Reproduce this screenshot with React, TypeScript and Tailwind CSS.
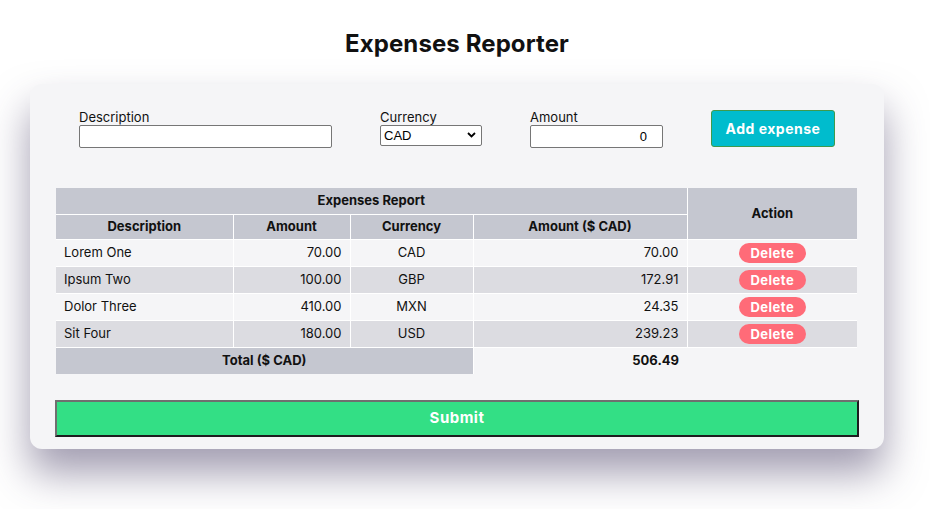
import React from "react";

const rows = [
  { d: "Lorem One", a: "70.00", c: "CAD", cad: "70.00" },
  { d: "Ipsum Two", a: "100.00", c: "GBP", cad: "172.91" },
  { d: "Dolor Three", a: "410.00", c: "MXN", cad: "24.35" },
  { d: "Sit Four", a: "180.00", c: "USD", cad: "239.23" },
];

export default function App() {
  return (
    <div className="min-h-[509px] w-[930px] bg-white font-['Inter',sans-serif] text-[#111]">
      <h1 className="pt-[28px] ml-[30px] w-[854px] text-center text-[24px] leading-[32px] font-bold tracking-[0.1px]">
        Expenses Reporter
      </h1>
      <div className="mt-[24px] ml-[30px] w-[854px] rounded-[12px] bg-[#f5f5f7] px-[25px] pt-[26px] pb-[12px] shadow-[0_24px_40px_rgba(70,60,100,0.5)]">
        <div className="flex items-start justify-center gap-[48px]">
          <div className="flex flex-col">
            <label className="text-[13px] leading-[15px]">Description</label>
            <input
              type="text"
              className="block w-[253px] h-[23px] border border-[#767676] rounded-[2px] bg-white px-[3px] text-[13px] font-['Liberation_Sans',sans-serif]"
            />
          </div>
          <div className="flex flex-col">
            <label className="text-[13px] leading-[15px]">Currency</label>
            <div className="relative w-[102px] h-[21px]">
              <select className="block appearance-none w-[102px] h-[21px] border border-[#767676] rounded-[2px] bg-white pl-[3px] text-[13px] leading-[19px] text-black font-['Liberation_Sans',sans-serif]">
                <option>CAD</option>
                <option>GBP</option>
                <option>MXN</option>
                <option>USD</option>
              </select>
              <svg
                className="absolute right-[6px] top-[7px] pointer-events-none"
                width="9"
                height="6"
                viewBox="0 0 9 6"
              >
                <path d="M1 1 L4.5 4.5 L8 1" fill="none" stroke="#000" strokeWidth="1.8" />
              </svg>
            </div>
          </div>
          <div className="flex flex-col">
            <label className="text-[13px] leading-[15px]">Amount</label>
            <input
              type="text"
              defaultValue="0"
              className="block w-[133px] h-[23px] border border-[#767676] rounded-[2px] bg-white pr-[15px] text-right text-[13px] text-black font-['Liberation_Sans',sans-serif]"
            />
          </div>
          <button className="w-[124px] h-[37px] rounded-[3px] border border-[#3f9a4c] bg-[#00bccd] text-white text-[14px] font-bold tracking-[0.5px]">
            Add expense
          </button>
        </div>

        <table className="mt-[40px] mx-px w-[801px] table-fixed border-collapse text-[13px]">
          <colgroup>
            <col className="w-[177px]" />
            <col className="w-[117px]" />
            <col className="w-[123px]" />
            <col className="w-[214px]" />
            <col className="w-[170px]" />
          </colgroup>
          <thead>
            <tr className="bg-[#c5c7d0]">
              <th colSpan={4} className="h-[26px] border border-white border-t-0 border-l-0 font-bold">
                Expenses Report
              </th>
              <th rowSpan={2} className="border border-white border-t-0 border-r-0 font-bold">
                Action
              </th>
            </tr>
            <tr className="bg-[#c5c7d0]">
              <th className="h-[25px] border border-white border-l-0 font-bold">Description</th>
              <th className="border border-white font-bold">Amount</th>
              <th className="border border-white font-bold">Currency</th>
              <th className="border border-white font-bold">Amount ($ CAD)</th>
            </tr>
          </thead>
          <tbody>
            {rows.map((r, i) => (
              <tr key={r.d} className={i % 2 === 1 ? "bg-[#dcdce1]" : "bg-[#f5f5f7]"}>
                <td className="h-[27px] border border-white border-l-0 px-[8px] text-left">{r.d}</td>
                <td className="border border-white px-[8px] text-right">{r.a}</td>
                <td className="border border-white px-[8px] text-center">{r.c}</td>
                <td className="border border-white px-[8px] text-right">{r.cad}</td>
                <td className="border border-white border-r-0 text-center">
                  <button className="mt-px w-[67px] h-[20px] rounded-full bg-[#ff6b78] text-white text-[13px] leading-[20px] font-bold tracking-[0.5px]">
                    Delete
                  </button>
                </td>
              </tr>
            ))}
            <tr>
              <td colSpan={3} className="h-[27px] bg-[#c5c7d0] border border-white border-l-0 border-b-0 text-center font-bold">
                Total ($ CAD)
              </td>
              <td className="px-[8px] text-right font-bold">506.49</td>
              <td></td>
            </tr>
          </tbody>
        </table>

        <button className="mt-[26px] w-[804px] h-[37px] border-2 border-t-[#6f6f6f] border-l-[#6f6f6f] border-b-[#1d1d1f] border-r-[#1d1d1f] bg-[#33df85] text-white text-[15px] font-bold tracking-[0.5px]">
          Submit
        </button>
      </div>
    </div>
  );
}
